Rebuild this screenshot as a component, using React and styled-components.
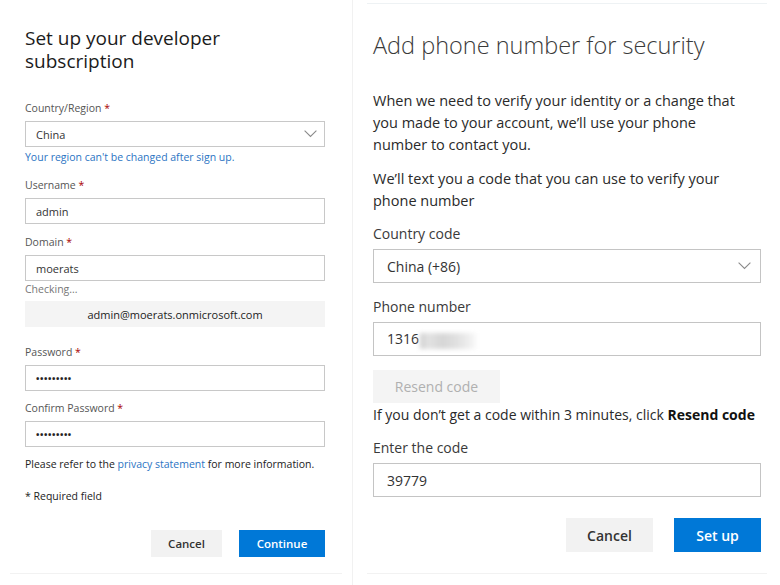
import React from 'react';
import styled, { createGlobalStyle } from 'styled-components';

const GlobalStyle = createGlobalStyle`
  html, body {
    margin: 0;
    padding: 0;
    background: #ffffff;
  }
  body {
    font-family: "Open Sans", "Noto Sans", sans-serif;
    color: #222;
  }
`;

const Page = styled.div`
  display: flex;
  width: 780px;
  height: 585px;
  overflow: hidden;
`;

const LeftPanel = styled.div`
  width: 353px;
  box-sizing: border-box;
  border-right: 1px solid #f1f1f1;
  padding: 0 10px;
`;

const RightPanel = styled.div`
  flex: 1;
  padding: 0 13px 0 14px;
`;

const Card = styled.div`
  box-sizing: border-box;
  border-bottom: 1px solid #f2f2f2;
  border-top: ${({ $topLine }) => ($topLine ? '1px solid #eef2f4' : 'none')};
  margin-top: ${({ $topLine }) => ($topLine ? '3px' : '0')};
  height: ${({ $topLine }) => ($topLine ? '571px' : '574px')};
  padding: ${({ $pad }) => $pad};
  display: flex;
  flex-direction: column;
`;

const SmallTitle = styled.h1`
  margin: 0;
  font-size: 19px;
  line-height: 23px;
  font-weight: 400;
  color: #1b1b1b;
  width: 240px;
`;

const BigTitle = styled.h1`
  margin: 0;
  font-size: 23.5px;
  line-height: 32px;
  font-weight: 300;
  color: #3a3a3a;
`;

const SmallLabel = styled.div`
  font-size: 10.5px;
  line-height: 15px;
  color: #555;
  margin-top: ${({ $mt }) => $mt || '0'};
`;

const Req = styled.span`
  color: #a80000;
`;

const SmallBox = styled.div`
  box-sizing: border-box;
  height: 26px;
  margin-top: 5px;
  border: 1px solid #c8c8c8;
  display: flex;
  align-items: center;
  justify-content: space-between;
  padding: 0 7px 0 10px;
  font-size: 11px;
  color: #333;
`;

const Dots = styled.span`
  font-size: 9px;
  letter-spacing: 0.6px;
  font-weight: 700;
  color: #222;
`;

const Hint = styled.div`
  font-size: 10.5px;
  line-height: 15px;
  margin-top: ${({ $mt }) => $mt || '3px'};
  color: ${({ $blue }) => ($blue ? '#2b74c3' : '#777')};
`;

const EmailBox = styled.div`
  height: 26px;
  margin-top: 4px;
  background: #f4f4f4;
  display: flex;
  align-items: center;
  justify-content: center;
  font-size: 11px;
  color: #222;
`;

const Note = styled.div`
  font-size: 10.5px;
  line-height: 15px;
  color: #222;
  margin-top: ${({ $mt }) => $mt};
`;

const Link = styled.a`
  color: #2b74c3;
  text-decoration: none;
`;

const ButtonRow = styled.div`
  display: flex;
  justify-content: flex-end;
  gap: ${({ $gap }) => $gap};
  margin-top: ${({ $mt }) => $mt};
`;

const Button = styled.button`
  box-sizing: border-box;
  width: ${({ $w }) => $w};
  height: ${({ $h }) => $h};
  border: none;
  font-family: inherit;
  font-size: ${({ $fs }) => $fs};
  font-weight: 600;
  background: ${({ $primary }) => ($primary ? '#0078d7' : '#f2f2f2')};
  color: ${({ $primary }) => ($primary ? '#fff' : '#333')};
  padding: 0;
`;

const Para = styled.p`
  margin: ${({ $mt }) => $mt} 0 0;
  font-size: 14.5px;
  line-height: 22px;
  color: #2a2a2a;
  width: 378px;
`;

const BigLabel = styled.div`
  font-size: 14px;
  line-height: 20px;
  color: #3a3a3a;
  margin-top: ${({ $mt }) => $mt};
`;

const BigBox = styled.div`
  box-sizing: border-box;
  height: 34px;
  margin-top: 5px;
  border: 1px solid #c4c4c4;
  display: flex;
  align-items: center;
  justify-content: space-between;
  padding: 0 9px 0 13px;
  font-size: 14px;
  color: #333;
`;

const Blurred = styled.span`
  display: inline-block;
  width: 56px;
  height: 16px;
  margin-left: 1px;
  background: linear-gradient(90deg, #cfcfcf, #e2e2e2 15%, #d6d6d6 40%, #e0e0e0 65%, #ededed 85%, #f8f8f8);
  filter: blur(2px);
  vertical-align: middle;
`;

const ResendButton = styled.div`
  width: 127px;
  height: 33px;
  margin-top: 14px;
  background: #f4f4f4;
  display: flex;
  align-items: center;
  justify-content: center;
  font-size: 14px;
  color: #b0b0b0;
`;

const InfoLine = styled.div`
  margin-top: 2px;
  font-size: 14px;
  line-height: 20px;
  color: #2a2a2a;
  white-space: nowrap;

  b {
    color: #111;
  }
`;

const Chevron = ({ size = 12 }) => (
  <svg width={size} height={size / 2 + 1} viewBox="0 0 12 7">
    <polyline points="0.5,0.5 6,6 11.5,0.5" fill="none" stroke="#8a8a8a" strokeWidth="1" />
  </svg>
);

export default function App() {
  return (
    <Page>
      <GlobalStyle />
      <LeftPanel>
        <Card $pad="27px 17px 0 15px">
          <SmallTitle>Set up your developer subscription</SmallTitle>

          <SmallLabel $mt="28px">Country/Region <Req>*</Req></SmallLabel>
          <SmallBox>
            China
            <Chevron size={13} />
          </SmallBox>
          <Hint $blue>Your region can't be changed after sign up.</Hint>

          <SmallLabel $mt="13px">Username <Req>*</Req></SmallLabel>
          <SmallBox>admin</SmallBox>

          <SmallLabel $mt="11px">Domain <Req>*</Req></SmallLabel>
          <SmallBox>moerats</SmallBox>
          <Hint $mt="1px">Checking...</Hint>
          <EmailBox>admin@moerats.onmicrosoft.com</EmailBox>

          <SmallLabel $mt="18px">Password <Req>*</Req></SmallLabel>
          <SmallBox><Dots>•••••••••</Dots></SmallBox>

          <SmallLabel $mt="10px">Confirm Password <Req>*</Req></SmallLabel>
          <SmallBox><Dots>•••••••••</Dots></SmallBox>

          <Note $mt="10px">
            Please refer to the <Link href="#">privacy statement</Link> for more information.
          </Note>
          <Note $mt="17px">* Required field</Note>

          <ButtonRow $gap="17px" $mt="26px">
            <Button $w="71px" $h="27px" $fs="11.5px">Cancel</Button>
            <Button $primary $w="86px" $h="27px" $fs="11.5px">Continue</Button>
          </ButtonRow>
        </Card>
      </LeftPanel>

      <RightPanel>
        <Card $topLine $pad="25px 6px 0 6px">
          <BigTitle>Add phone number for security</BigTitle>
          <Para $mt="29px">
            When we need to verify your identity or a change that you made to your account, we’ll use your phone number to contact you.
          </Para>
          <Para $mt="12px">We’ll text you a code that you can use to verify your phone number</Para>

          <BigLabel $mt="12px">Country code</BigLabel>
          <BigBox>
            China (+86)
            <Chevron size={13} />
          </BigBox>

          <BigLabel $mt="14px">Phone number</BigLabel>
          <BigBox>
            <span>1316<Blurred /></span>
          </BigBox>

          <ResendButton>Resend code</ResendButton>
          <InfoLine>
            If you don’t get a code within 3 minutes, click <b>Resend code</b>
          </InfoLine>

          <BigLabel $mt="13px">Enter the code</BigLabel>
          <BigBox>39779</BigBox>

          <ButtonRow $gap="21px" $mt="21px">
            <Button $w="87px" $h="34px" $fs="14px">Cancel</Button>
            <Button $primary $w="87px" $h="34px" $fs="14px">Set up</Button>
          </ButtonRow>
        </Card>
      </RightPanel>
    </Page>
  );
}
